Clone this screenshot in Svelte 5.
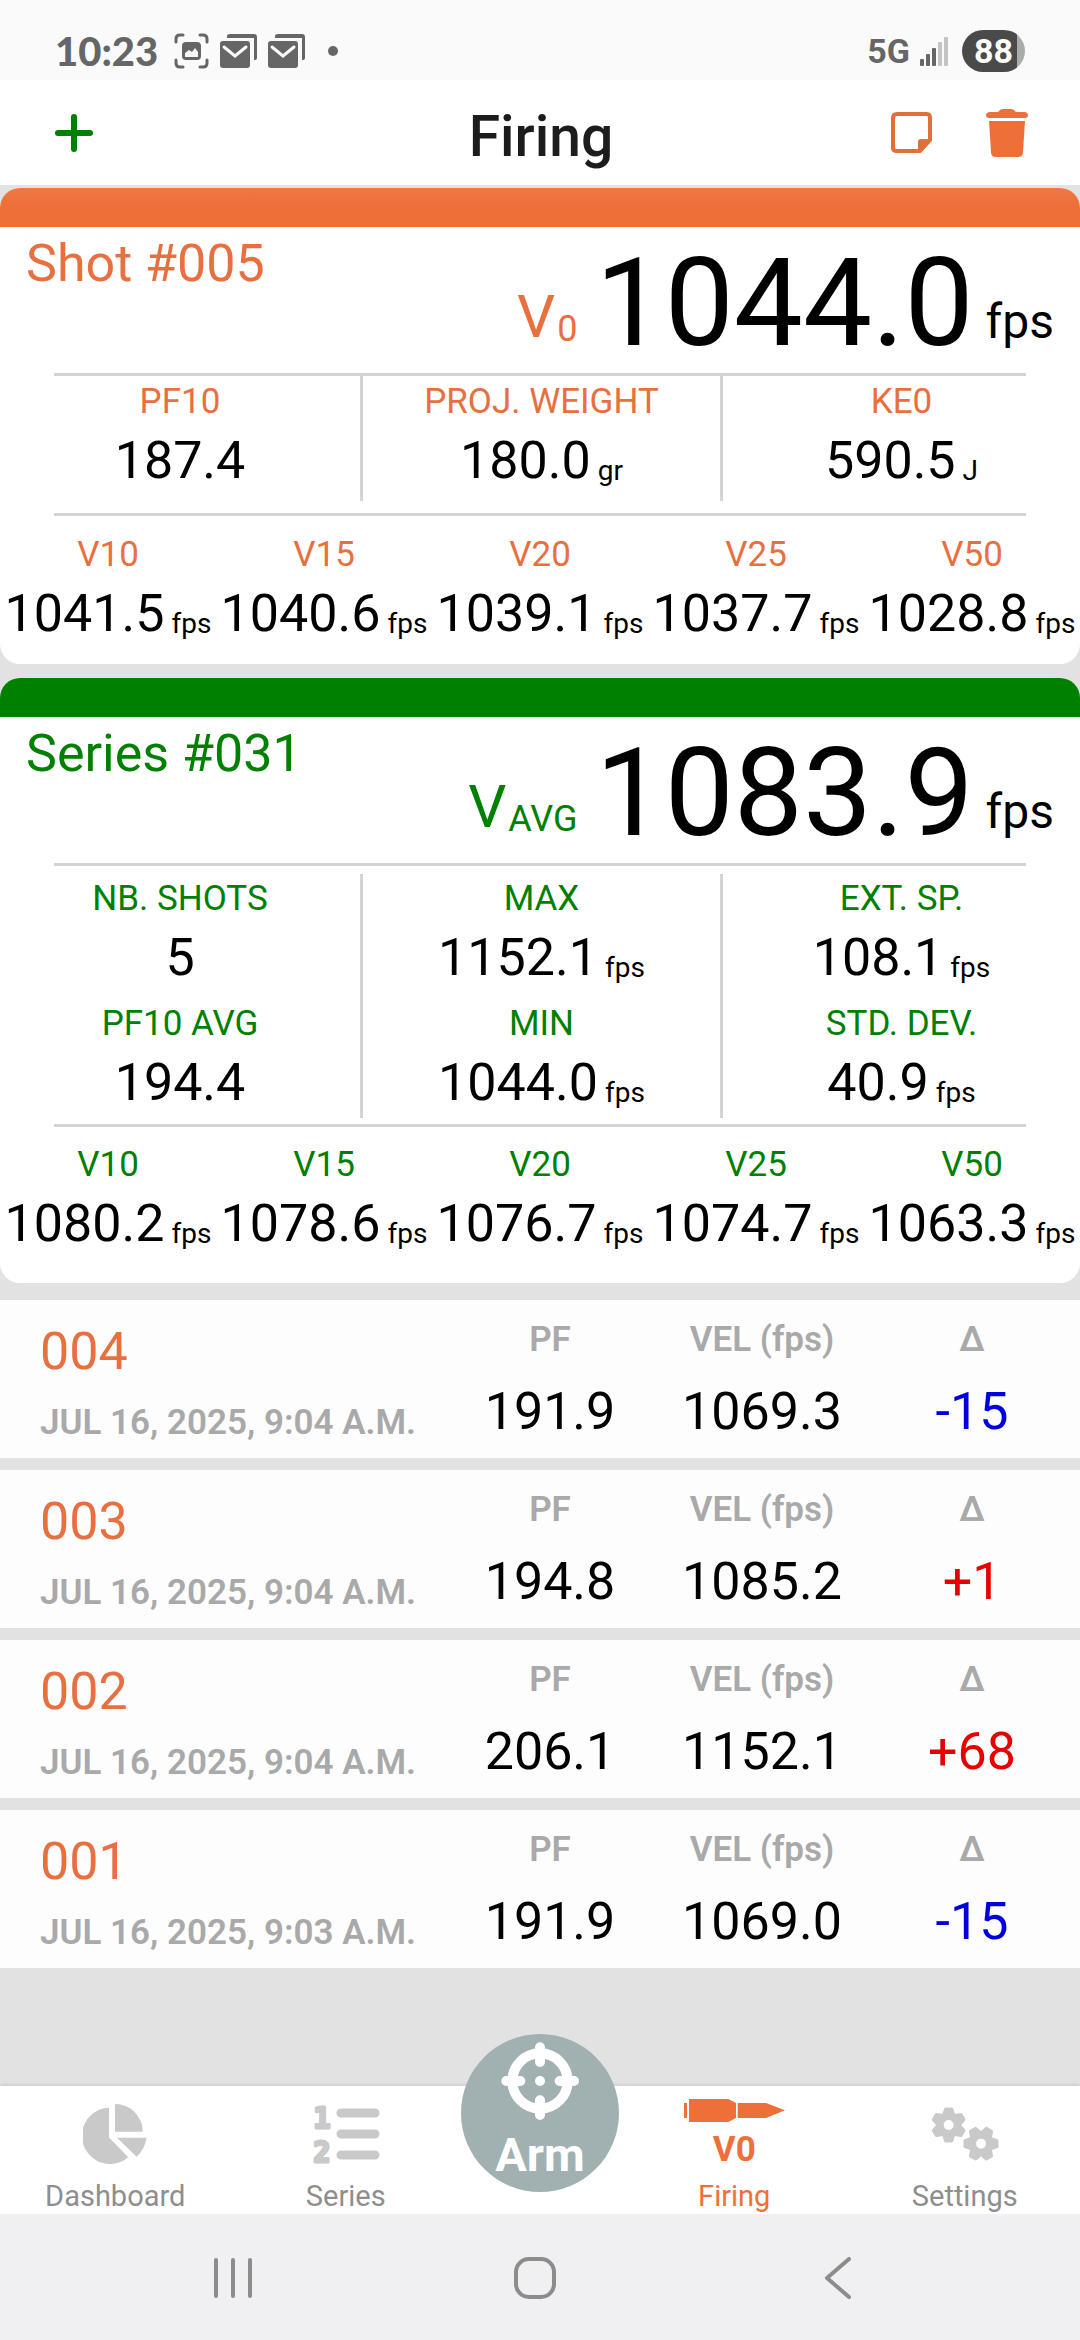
<script>
  let activeTab = 'firing'

  const shot = {
    title: 'Shot #005',
    sub: '0',
    velocity: '1044.0',
    columns: [
      [{ label: 'PF10', value: '187.4' }],
      [{ label: 'PROJ. WEIGHT', value: '180.0', unit: 'gr' }],
      [{ label: 'KE0', value: '590.5', unit: 'J' }]
    ],
    distances: [
      { label: 'V10', value: '1041.5', unit: 'fps' },
      { label: 'V15', value: '1040.6', unit: 'fps' },
      { label: 'V20', value: '1039.1', unit: 'fps' },
      { label: 'V25', value: '1037.7', unit: 'fps' },
      { label: 'V50', value: '1028.8', unit: 'fps' }
    ]
  }

  const series = {
    title: 'Series #031',
    sub: 'AVG',
    velocity: '1083.9',
    columns: [
      [{ label: 'NB. SHOTS', value: '5' }, { label: 'PF10 AVG', value: '194.4' }],
      [{ label: 'MAX', value: '1152.1', unit: 'fps' }, { label: 'MIN', value: '1044.0', unit: 'fps' }],
      [{ label: 'EXT. SP.', value: '108.1', unit: 'fps' }, { label: 'STD. DEV.', value: '40.9', unit: 'fps' }]
    ],
    distances: [
      { label: 'V10', value: '1080.2', unit: 'fps' },
      { label: 'V15', value: '1078.6', unit: 'fps' },
      { label: 'V20', value: '1076.7', unit: 'fps' },
      { label: 'V25', value: '1074.7', unit: 'fps' },
      { label: 'V50', value: '1063.3', unit: 'fps' }
    ]
  }

  const cards = [
    { kind: 'shot', data: shot },
    { kind: 'series', data: series }
  ]

  const shots = [
    { id: '004', date: 'JUL 16, 2025, 9:04 A.M.', pf: '191.9', vel: '1069.3', delta: '-15' },
    { id: '003', date: 'JUL 16, 2025, 9:04 A.M.', pf: '194.8', vel: '1085.2', delta: '+1' },
    { id: '002', date: 'JUL 16, 2025, 9:04 A.M.', pf: '206.1', vel: '1152.1', delta: '+68' },
    { id: '001', date: 'JUL 16, 2025, 9:03 A.M.', pf: '191.9', vel: '1069.0', delta: '-15' }
  ]

  const teeth = [0, 60, 120, 180, 240, 300]

  const selectTab = (tab) => () => {
    activeTab = tab
  }
</script>

{#snippet stat(item)}
  <div class="stat">
    <div class="label">{item.label}</div>
    <div class="value">
      <span>{item.value}</span>
      {#if item.unit}<span class="unit">{item.unit}</span>{/if}
    </div>
  </div>
{/snippet}

{#snippet gear(x, y, turn)}
  <g transform="translate({x} {y}) rotate({turn})">
    <circle r="38" />
    {#each teeth as angle}
      <path d="M-14 -34 L-9 -48 L9 -48 L14 -34 Z" stroke="currentColor" stroke-width="9" stroke-linejoin="round" transform="rotate({angle})" />
    {/each}
    <circle r="15" fill="#fff" />
  </g>
{/snippet}

<div class="screen">
  <div class="status">
    <div class="status-left">
      <span class="time">10:23</span>
      <svg class="capture" width="35" height="36" viewBox="0 0 35 36" fill="none" stroke="#666" stroke-width="3" stroke-linecap="round">
        <path d="M2 9V6Q2 2 6 2H9M26 2H29Q33 2 33 6V9M33 27V30Q33 34 29 34H26M9 34H6Q2 34 2 30V27" />
        <rect x="8" y="9" width="19" height="18" rx="4" fill="#666" stroke="none" />
        <path d="M11 24V20L15 17L18 19L21 15L24 19V24Z" fill="#fafafa" stroke="none" />
      </svg>
      {#each [1, 2] as mail (mail)}
        <svg class="mail" width="37" height="34" viewBox="0 0 37 34">
          <path d="M7 4V2Q7 0 10 0H34Q37 0 37 3V24Q37 26 34 26V4Z" fill="#666" />
          <rect x="0" y="7" width="30" height="27" rx="3" fill="#666" />
          <path d="M4 13L15 22L26 13" fill="none" stroke="#fafafa" stroke-width="3" stroke-linecap="round" />
        </svg>
      {/each}
      <span class="dot"></span>
    </div>
    <div class="status-right">
      <span>5G</span>
      <svg width="28" height="29" viewBox="0 0 28 29" fill="#666">
        <rect x="0" y="22" width="4" height="7" rx="1" />
        <rect x="6" y="17" width="4" height="12" rx="1" />
        <rect x="12" y="11" width="4" height="18" rx="1" />
        <rect x="18" y="5" width="4" height="24" rx="1" fill="#c4c4c4" />
        <rect x="24" y="0" width="4" height="29" rx="1" fill="#c4c4c4" />
      </svg>
      <span class="battery">88</span>
    </div>
  </div>

  <header>
    <button class="add" aria-label="New series">
      <svg width="40" height="40" viewBox="0 0 40 40" stroke="#008000" stroke-width="6" stroke-linecap="round">
        <path d="M20 4V36M4 20H36" />
      </svg>
    </button>
    <h1>Firing</h1>
    <div class="actions">
      <button aria-label="Notes">
        <svg width="42" height="42" viewBox="0 0 42 42">
          <path d="M6 2H36Q39 2 39 6V28L29 39H6Q2 39 2 36V6Q2 2 6 2Z" fill="none" stroke="#e07038" stroke-width="4" />
          <path d="M27 40V30Q27 27 30 27H41L29 41Z" fill="#e07038" />
        </svg>
      </button>
      <button aria-label="Delete">
        <svg width="42" height="48" viewBox="0 0 42 48" fill="#ee7038">
          <path d="M12 3Q14 0 17 0H25Q28 0 30 3H39Q42 4 42 6Q42 9 39 9H3Q0 9 0 6Q0 4 3 3Z" />
          <path d="M3 12H39L37 43Q37 48 32 48H10Q5 48 5 43Z" />
        </svg>
      </button>
    </div>
  </header>

  <main>
    {#each cards as card}
      <section class="card {card.kind}">
        <div class="bar"></div>
        <div class="hero">
          <h2>{card.data.title}</h2>
          <div class="velocity">
            <span class="v">V</span>
            <span class="sub">{card.data.sub}</span>
            <span class="number">{card.data.velocity}</span>
            <span class="fps">fps</span>
          </div>
        </div>
        <hr />
        <div class="columns">
          {#each card.data.columns as column}
            <div class="column">
              {#each column as item}
                {@render stat(item)}
              {/each}
            </div>
          {/each}
        </div>
        <hr />
        <div class="distances">
          {#each card.data.distances as item}
            {@render stat(item)}
          {/each}
        </div>
      </section>
    {/each}

    <ul class="shots">
      {#each shots as item}
        <li>
          <div class="info">
            <div class="id">{item.id}</div>
            <div class="date">{item.date}</div>
          </div>
          <div class="cell">
            <div class="head">PF</div>
            <div class="figure">{item.pf}</div>
          </div>
          <div class="cell">
            <div class="head">VEL (fps)</div>
            <div class="figure">{item.vel}</div>
          </div>
          <div class="cell">
            <div class="head">Δ</div>
            <div class="figure {item.delta.startsWith('+') ? 'up' : 'down'}">{item.delta}</div>
          </div>
        </li>
      {/each}
    </ul>
  </main>

  <nav class="tabs">
    <button class="tab" class:active={activeTab === 'dashboard'} on:click={selectTab('dashboard')}>
      <span class="icon">
        <svg width="64" height="60" viewBox="255 282 192 181" fill="currentColor">
          <path d="M333 293V383L391 443A85 85 0 1 1 333 293Z" />
          <path d="M351 282A84 84 0 0 1 435 366H351Z" />
          <path d="M357 384H446Q442 418 416 441Z" />
        </svg>
      </span>
      <span class="name">Dashboard</span>
    </button>
    <button class="tab" class:active={activeTab === 'series'} on:click={selectTab('series')}>
      <span class="icon">
        <svg width="68" height="80" viewBox="0 -10 68 80" fill="currentColor">
          <text class="digit" x="10" y="24" text-anchor="middle">1</text>
          <text class="digit" x="10" y="58" text-anchor="middle">2</text>
          <path d="M29 9H63M29 30H63M29 51H63" stroke="currentColor" stroke-width="9" stroke-linecap="round" />
        </svg>
      </span>
      <span class="name">Series</span>
    </button>
    <button class="arm">
      <svg width="78" height="78" viewBox="300 96 234 234" fill="none" stroke="#fff" stroke-width="30" stroke-linecap="round">
        <circle cx="417" cy="213" r="83" />
        <path d="M417 112V156M417 271V315M316 213H358M476 213H519" />
        <circle cx="417" cy="213" r="15" fill="#fff" stroke="none" />
      </svg>
      Arm
    </button>
    <button class="tab" class:active={activeTab === 'firing'} on:click={selectTab('firing')}>
      <span class="icon">
        <svg width="101" height="23" viewBox="852 270 303 69" fill="currentColor">
          <path d="M852 282H861V327H852ZM867 270H985L1008 282V327L985 339H867ZM1013 282H1098L1155 304L1098 327H1013Z" />
        </svg>
        <span class="v0">V0</span>
      </span>
      <span class="name">Firing</span>
    </button>
    <button class="tab" class:active={activeTab === 'settings'} on:click={selectTab('settings')}>
      <span class="icon">
        <svg width="68" height="54" viewBox="808 292 204 162" fill="currentColor">
          {@render gear(861, 346, 0)}
          {@render gear(958, 402, 30)}
        </svg>
      </span>
      <span class="name">Settings</span>
    </button>
  </nav>

  <div class="system">
    <button aria-label="Recents">
      <svg width="42" height="42" viewBox="0 0 42 42"><path d="M4 3V39M21 3V39M38 3V39" /></svg>
    </button>
    <button aria-label="Home">
      <svg width="42" height="42" viewBox="0 0 42 42"><rect x="2" y="2" width="38" height="38" rx="13" /></svg>
    </button>
    <button aria-label="Back">
      <svg width="26" height="42" viewBox="0 0 26 42"><path d="M24 2L2 21L24 40" /></svg>
    </button>
  </div>
</div>

<style>
  :global(body) {
    margin: 0;
    background: #e2e2e2;
  }

  .screen {
    display: flex;
    flex-direction: column;
    min-height: 100vh;
    font-family: Roboto, "Liberation Sans", sans-serif;
    color: #000;
  }

  button {
    margin: 0;
    padding: 0;
    border: 0;
    background: none;
    font-family: inherit;
    cursor: pointer;
  }

  svg {
    display: block;
    flex: none;
  }

  h1,
  h2,
  ul {
    margin: 0;
    padding: 0;
    font-weight: 400;
  }

  .status {
    display: flex;
    justify-content: space-between;
    height: 58px;
    padding: 22px 55px 0;
    background: #fafafa;
    color: #666;
  }

  .status-left,
  .status-right {
    display: flex;
    align-items: center;
  }

  .time {
    font-family: Lato, sans-serif;
    font-size: 40px;
    font-weight: 900;
  }

  .capture {
    margin-left: 16px;
  }

  .mail {
    margin-left: 11px;
  }

  .dot {
    width: 10px;
    height: 10px;
    margin-left: 23px;
    border-radius: 50%;
    background: #666;
  }

  .status-right {
    gap: 10px;
    font-size: 34px;
    font-weight: 700;
  }

  .battery {
    width: 63px;
    margin-left: 4px;
    border-radius: 21px;
    background: linear-gradient(to right, #4a4a4a 87%, #ababab 87%);
    color: #fff;
    line-height: 42px;
    text-align: center;
  }

  header {
    display: grid;
    grid-template-columns: 1fr auto 1fr;
    align-items: center;
    height: 105px;
    padding: 0 52px 0 54px;
    background: #fff;
  }

  h1 {
    padding-top: 8px;
    color: #1c1c1e;
    font-size: 57px;
    font-weight: 500;
    line-height: 76px;
  }

  .actions {
    display: flex;
    justify-content: flex-end;
    align-items: center;
    gap: 53px;
  }

  main {
    flex: 1;
    padding-top: 3px;
  }

  .card {
    margin-bottom: 14px;
    border-radius: 20px;
    background: #fff;
    overflow: hidden;
  }

  .bar {
    height: 39px;
  }

  .shot .bar {
    background: linear-gradient(#ef7744, #ee6f38 50%);
  }

  .series .bar {
    background: #008000;
  }

  .shot h2,
  .shot .v,
  .shot .sub,
  .shot .label {
    color: #e87040;
  }

  .series h2,
  .series .v,
  .series .sub,
  .series .label {
    color: #008000;
  }

  .hero {
    display: flex;
    justify-content: space-between;
    align-items: flex-start;
    height: 146px;
    padding: 0 26px;
  }

  h2 {
    padding-top: 6px;
    font-size: 52px;
    line-height: 62px;
  }

  .velocity {
    display: flex;
    align-items: flex-end;
    padding-top: 12px;
  }

  .v {
    margin-right: 2px;
    font-size: 60px;
    line-height: 100px;
  }

  .sub {
    font-size: 36px;
    line-height: 76px;
  }

  .number {
    margin: 0 12px 0 18px;
    font-size: 123px;
    line-height: 128px;
  }

  .fps {
    font-size: 48px;
    line-height: 90px;
  }

  hr {
    height: 3px;
    margin: 0 5%;
    border: 0;
    background: #d3d3d3;
  }

  .columns {
    display: grid;
    grid-template-columns: repeat(3, 1fr);
    margin-bottom: 12px;
  }

  .series .columns {
    margin: 8px 0 6px;
  }

  .column {
    display: flex;
    flex-direction: column;
    gap: 7px;
    padding: 2px 0 5px;
  }

  .series .column {
    padding: 1px 0 0;
  }

  .column + .column {
    border-left: 3px solid #d3d3d3;
  }

  .distances {
    display: grid;
    grid-template-columns: repeat(5, 1fr);
    padding: 15px 0;
  }

  .series .distances {
    padding: 14px 0 24px;
  }

  .stat {
    text-align: center;
  }

  .label {
    font-size: 35px;
    line-height: 48px;
  }

  .value {
    display: flex;
    justify-content: center;
    align-items: flex-end;
    gap: 7px;
    font-size: 52px;
    line-height: 70px;
    white-space: nowrap;
  }

  .unit {
    font-size: 28px;
    line-height: 50px;
  }

  .shots {
    display: flex;
    flex-direction: column;
    gap: 12px;
    padding: 3px 0 40px;
    list-style: none;
  }

  .shots li {
    display: grid;
    grid-template-columns: 110fr 55fr 51fr 54fr;
    height: 158px;
    background: #fdfdfd;
  }

  .info {
    padding: 21px 0 0 40px;
  }

  .id {
    margin-bottom: 16px;
    color: #e87040;
    font-size: 52px;
    line-height: 62px;
  }

  .date,
  .head {
    color: #a9a9a9;
    font-size: 35px;
    font-weight: 600;
    line-height: 48px;
    white-space: nowrap;
  }

  .cell {
    padding-top: 16px;
    text-align: center;
  }

  .figure {
    margin-top: 13px;
    font-size: 52px;
    line-height: 70px;
  }

  .up {
    color: #e60000;
  }

  .down {
    color: #0000dc;
  }

  .tabs {
    display: flex;
    align-items: flex-start;
    height: 128px;
    background: #fff;
    box-shadow: 0 -1px 4px rgba(0, 0, 0, 0.12);
  }

  .tab {
    display: flex;
    flex: 1;
    flex-direction: column;
    align-items: center;
    color: #c9c9c9;
  }

  .icon {
    display: flex;
    flex-direction: column;
    align-items: center;
    justify-content: center;
    gap: 8px;
    height: 88px;
    padding-top: 4px;
  }

  .name {
    color: #8e8e8e;
    font-size: 29px;
    line-height: 36px;
  }

  .active,
  .active .name {
    color: #ee7038;
  }

  .digit {
    font-family: "DejaVu Sans Mono", monospace;
    font-size: 28px;
    font-weight: 700;
    stroke: currentColor;
    stroke-width: 3;
    stroke-linejoin: round;
  }

  .v0 {
    font-size: 35px;
    font-weight: 700;
    line-height: 40px;
  }

  .arm {
    display: flex;
    flex-direction: column;
    align-items: center;
    gap: 10px;
    width: 158px;
    height: 158px;
    margin-top: -52px;
    padding-top: 8px;
    border-radius: 50%;
    background: #a1b1b1;
    color: #fff;
    font-size: 47px;
    font-weight: 700;
    line-height: 50px;
  }

  .system {
    display: flex;
    height: 126px;
    padding: 2px 91px 0 82px;
    box-sizing: border-box;
    background: #f0f0f2;
  }

  .system button {
    display: flex;
    flex: 1;
    align-items: center;
    justify-content: center;
  }

  .system svg {
    fill: none;
    stroke: #8c8c8c;
    stroke-width: 4;
    stroke-linecap: round;
    stroke-linejoin: round;
  }
</style>
